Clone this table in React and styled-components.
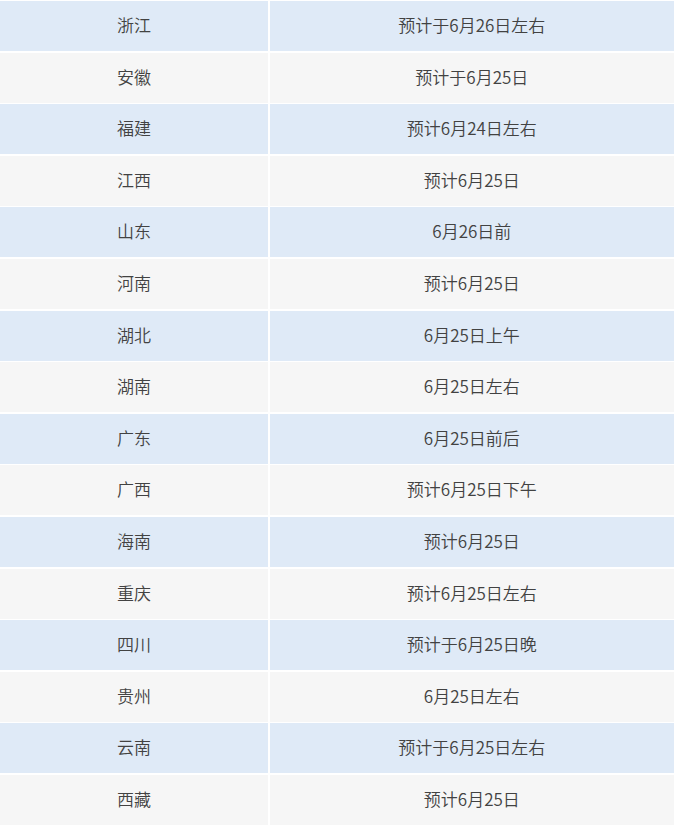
import React from "react";
import styled, { createGlobalStyle } from "styled-components";

const Global = createGlobalStyle`
  html, body { margin: 0; padding: 0; background: #ffffff; }
  body { font-family: "Noto Sans CJK SC", "Noto Sans", sans-serif; }
`;

const Table = styled.div`
  display: grid;
  grid-template-columns: 268px 1fr;
  column-gap: 1.6px;
  row-gap: 1.6px;
  padding-top: 1px;
  width: 674px;
  background: #ffffff;
`;

const Cell = styled.div`
  height: 50px;
  box-sizing: border-box;
  padding-bottom: 3px;
  display: flex;
  align-items: center;
  justify-content: center;
  background: ${(p) => (p.$alt ? "#f6f6f6" : "#dfeaf7")};
  color: #424242;
  font-size: 17px;
  font-weight: 350;
  line-height: 1;
  white-space: nowrap;
`;

const rows = [
  ["浙江", "预计于6月26日左右"],
  ["安徽", "预计于6月25日"],
  ["福建", "预计6月24日左右"],
  ["江西", "预计6月25日"],
  ["山东", "6月26日前"],
  ["河南", "预计6月25日"],
  ["湖北", "6月25日上午"],
  ["湖南", "6月25日左右"],
  ["广东", "6月25日前后"],
  ["广西", "预计6月25日下午"],
  ["海南", "预计6月25日"],
  ["重庆", "预计6月25日左右"],
  ["四川", "预计于6月25日晚"],
  ["贵州", "6月25日左右"],
  ["云南", "预计于6月25日左右"],
  ["西藏", "预计6月25日"],
];

export default function App() {
  return (
    <>
      <Global />
      <Table>
        {rows.map(([prov, date], i) => (
          <React.Fragment key={prov}>
            <Cell $alt={i % 2 === 1}>{prov}</Cell>
            <Cell $alt={i % 2 === 1}>{date}</Cell>
          </React.Fragment>
        ))}
      </Table>
    </>
  );
}
